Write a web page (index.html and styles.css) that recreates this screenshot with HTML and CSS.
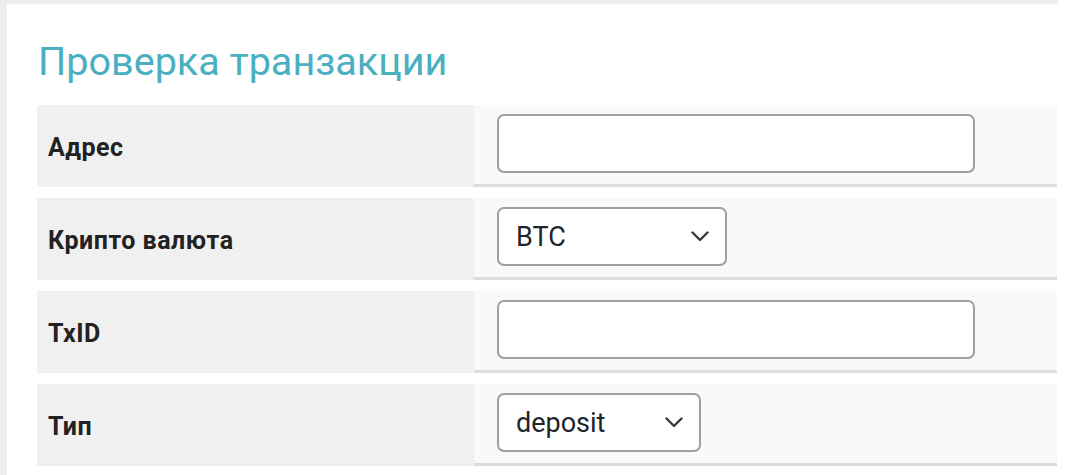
FILE: index.html
```html
<!DOCTYPE html>
<html lang="ru">
<head>
<meta charset="utf-8">
<title>Проверка транзакции</title>
<link rel="stylesheet" href="styles.css">
</head>
<body>
<div class="page">
  <div class="panel">
    <h1 class="title">Проверка транзакции</h1>
    <div class="rows">
      <div class="row">
        <div class="label">Адрес</div>
        <div class="value"><input class="text-input" type="text"></div>
      </div>
      <div class="row">
        <div class="label">Крипто валюта</div>
        <div class="value">
          <div class="select-wrap select-btc">
            <select class="select"><option>BTC</option><option>ETH</option></select>
            <svg class="chevron" width="18" height="11" viewBox="0 0 18 11"><path d="M1.5 1.5 L9 9 L16.5 1.5" fill="none" stroke="#3a3a3a" stroke-width="2.4" stroke-linecap="round" stroke-linejoin="round"/></svg>
          </div>
        </div>
      </div>
      <div class="row">
        <div class="label">TxID</div>
        <div class="value"><input class="text-input" type="text"></div>
      </div>
      <div class="row">
        <div class="label">Тип</div>
        <div class="value">
          <div class="select-wrap select-type">
            <select class="select"><option>deposit</option><option>withdraw</option></select>
            <svg class="chevron" width="18" height="11" viewBox="0 0 18 11"><path d="M1.5 1.5 L9 9 L16.5 1.5" fill="none" stroke="#3a3a3a" stroke-width="2.4" stroke-linecap="round" stroke-linejoin="round"/></svg>
          </div>
        </div>
      </div>
    </div>
  </div>
</div>
</body>
</html>
```

FILE: styles.css
```css
* { box-sizing: border-box; }

html, body {
  margin: 0;
  padding: 0;
  background: #ffffff;
}

body {
  font-family: Roboto, "Liberation Sans", Arial, sans-serif;
  color: #212529;
}

.page {
  width: 1058px;
  height: 475px;
  overflow: hidden;
}

.panel {
  background: #ffffff;
  border-left: 7px solid #eeeeee;
  border-top: 4px solid #eeeeee;
  padding: 0 1px 0 30px;
  height: 100%;
}

.title {
  margin: 34px 0 19px 1px;
  font-size: 39.6px;
  line-height: 48px;
  font-weight: 400;
  color: #4aafc1;
}

.rows {
  display: flex;
  flex-direction: column;
  gap: 11px;
}

.row {
  display: flex;
  height: 82px;
}

.label {
  width: 437px;
  flex: none;
  background: #f0f0f0;
  display: flex;
  align-items: center;
  padding-left: 11px;
  padding-top: 2px;
  font-size: 25px;
  font-weight: 700;
  letter-spacing: 0.5px;
  color: #222222;
}

.value {
  flex: 1;
  background: #f9f9f9;
  border-bottom: 3px solid #dddddd;
  padding: 9px 23px 0;
}

.text-input {
  display: block;
  width: 478px;
  height: 59px;
  border: 2px solid #9aa0a6;
  border-radius: 7px;
  background: #ffffff;
  font: inherit;
  font-size: 27px;
  padding: 0 17px;
  outline: none;
}

.select-wrap {
  position: relative;
  height: 59px;
}

.select-btc { width: 230px; }
.select-type { width: 204px; }

.select {
  -webkit-appearance: none;
  appearance: none;
  display: block;
  width: 100%;
  height: 100%;
  border: 2px solid #9aa0a6;
  border-radius: 7px;
  background: #ffffff;
  font-family: Roboto, "Liberation Sans", Arial, sans-serif;
  font-size: 27px;
  color: #212529;
  padding: 0 40px 0 17px;
  outline: none;
}

.chevron {
  position: absolute;
  right: 18px;
  top: 24px;
  pointer-events: none;
}
```
